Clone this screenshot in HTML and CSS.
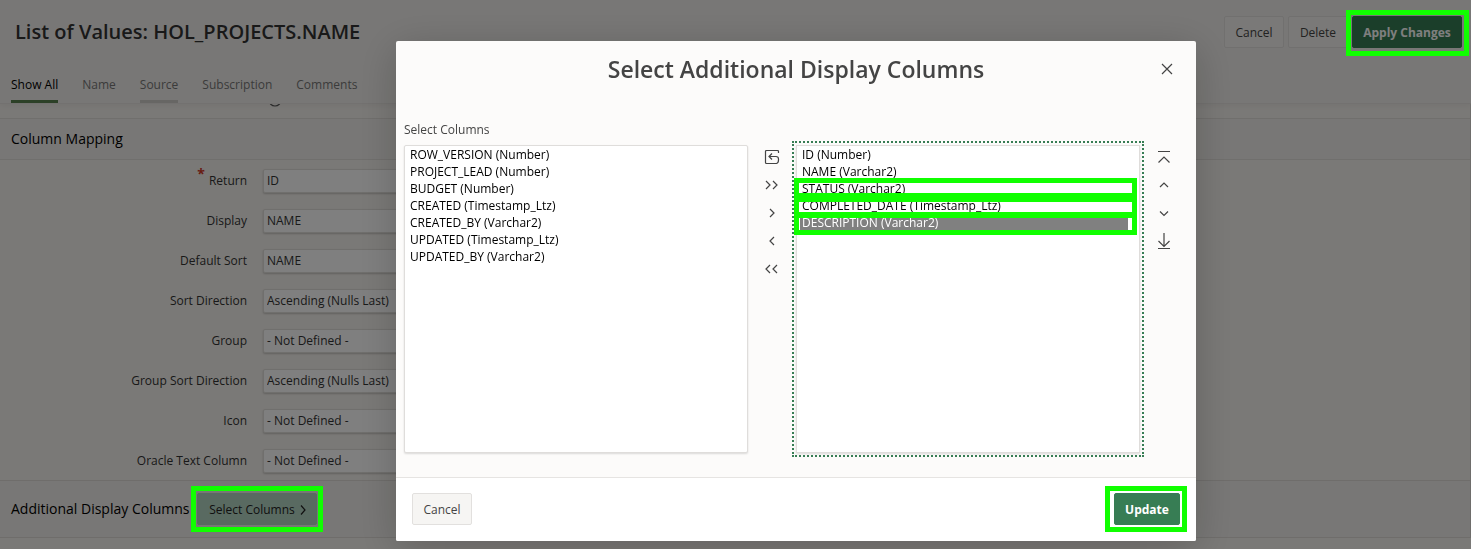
FILE: index.html
```html
<!DOCTYPE html>
<html lang="en">
<head>
<meta charset="utf-8">
<title>List of Values: HOL_PROJECTS.NAME</title>
<link rel="stylesheet" href="styles.css">
</head>
<body>
<header class="page-header">
  <div class="title-bar">
    <h1 class="page-title">List of Values: HOL_PROJECTS.NAME</h1>
    <div class="page-actions">
      <button class="btn" type="button">Cancel</button>
      <button class="btn btn-delete" type="button">Delete</button>
      <span class="marked marked-apply"><button class="btn btn-hot" type="button">Apply Changes</button><span class="mark"></span></span>
    </div>
  </div>
  <nav class="tabs">
    <a class="tab tab-current" href="#all">Show All</a>
    <a class="tab" href="#name">Name</a>
    <a class="tab tab-hover" href="#source">Source</a>
    <a class="tab" href="#subscription">Subscription</a>
    <a class="tab" href="#comments">Comments</a>
  </nav>
</header>
<main class="page-body">
  <div class="previous-end">
    <svg class="help-edge" width="14" height="4" viewBox="0 10 14 4"><circle cx="7" cy="6" r="6" fill="none" stroke="#555"/></svg>
  </div>
  <h2 class="section-title">Column Mapping</h2>
  <div class="form">
    <div class="field"><label class="required" for="f1">Return</label><select id="f1"><option>ID</option></select></div>
    <div class="field"><label for="f2">Display</label><select id="f2"><option>NAME</option></select></div>
    <div class="field"><label for="f3">Default Sort</label><select id="f3"><option>NAME</option></select></div>
    <div class="field"><label for="f4">Sort Direction</label><select id="f4"><option>Ascending (Nulls Last)</option></select></div>
    <div class="field"><label for="f5">Group</label><select id="f5"><option>- Not Defined -</option></select></div>
    <div class="field"><label for="f6">Group Sort Direction</label><select id="f6"><option>Ascending (Nulls Last)</option></select></div>
    <div class="field"><label for="f7">Icon</label><select id="f7"><option>- Not Defined -</option></select></div>
    <div class="field"><label for="f8">Oracle Text Column</label><select id="f8"><option>- Not Defined -</option></select></div>
  </div>
  <div class="section-bar">
    <h2 class="bar-title">Additional Display Columns</h2>
    <span class="marked"><button class="btn btn-select" type="button">Select Columns <svg width="6" height="10" viewBox="0 0 6 10"><path d="M1 .5 5 5 1 9.5"/></svg></button><span class="mark"></span></span>
  </div>
</main>

<div class="overlay">
  <section class="dialog" role="dialog" aria-labelledby="dlg-title">
    <header class="dialog-header">
      <h2 class="dialog-title" id="dlg-title">Select Additional Display Columns</h2>
      <button class="icon-btn close" type="button" aria-label="Close"><svg width="12" height="12" viewBox="0 0 12 12"><path d="M1 1 11 11M11 1 1 11"/></svg></button>
    </header>
    <div class="dialog-body">
      <label class="shuttle-label" for="available">Select Columns</label>
      <div class="shuttle">
        <select class="list" id="available" multiple size="18">
          <option>ROW_VERSION (Number)</option>
          <option>PROJECT_LEAD (Number)</option>
          <option>BUDGET (Number)</option>
          <option>CREATED (Timestamp_Ltz)</option>
          <option>CREATED_BY (Varchar2)</option>
          <option>UPDATED (Timestamp_Ltz)</option>
          <option>UPDATED_BY (Varchar2)</option>
        </select>
        <div class="controls">
          <button class="icon-btn" type="button" aria-label="Reset"><svg width="16" height="16" viewBox="0 0 16 16"><path d="M14.500 4V2.500Q14.500 1.500 13.500 1.500H2.500Q1.500 1.500 1.500 2.500V13.500Q1.500 14.500 2.500 14.500H12.500Q14.500 14 14.500 11V10Q14.500 7.500 12 7.500H5M8 4.500 5 7.500 8 10.500"/></svg></button>
          <button class="icon-btn" type="button" aria-label="Move all"><svg width="16" height="16" viewBox="0 0 16 16"><path d="M2 4 6 8 2 12M9 4 13 8 9 12"/></svg></button>
          <button class="icon-btn" type="button" aria-label="Move"><svg width="16" height="16" viewBox="0 0 16 16"><path d="M6 4 10 8 6 12"/></svg></button>
          <button class="icon-btn" type="button" aria-label="Remove"><svg width="16" height="16" viewBox="0 0 16 16"><path d="M10 4 6 8 10 12"/></svg></button>
          <button class="icon-btn" type="button" aria-label="Remove all"><svg width="16" height="16" viewBox="0 0 16 16"><path d="M6 4 2 8 6 12M13 4 9 8 13 12"/></svg></button>
        </div>
        <div class="chosen">
          <select class="list list-focus" multiple size="18" aria-label="Selected columns">
            <option>ID (Number)</option>
            <option>NAME (Varchar2)</option>
            <option>STATUS (Varchar2)</option>
            <option>COMPLETED_DATE (Timestamp_Ltz)</option>
            <option selected>DESCRIPTION (Varchar2)</option>
          </select>
          <span class="row-mark row-mark-status"></span>
          <span class="row-mark row-mark-date"></span>
          <span class="row-mark row-mark-description"></span>
        </div>
        <div class="controls">
          <button class="icon-btn" type="button" aria-label="Top"><svg width="16" height="16" viewBox="0 0 16 16"><path d="M2 2.500H14M2.500 13.500 8 8 13.500 13.500"/></svg></button>
          <button class="icon-btn" type="button" aria-label="Up"><svg width="16" height="16" viewBox="0 0 16 16"><path d="M4 10 8 6 12 10"/></svg></button>
          <button class="icon-btn" type="button" aria-label="Down"><svg width="16" height="16" viewBox="0 0 16 16"><path d="M4 6.500 8 10.500 12 6.500"/></svg></button>
          <button class="icon-btn" type="button" aria-label="Bottom"><svg width="16" height="16" viewBox="0 0 16 16"><path d="M8 0V13M2.500 8 8 13.500 13.500 8M2 15.500H14"/></svg></button>
        </div>
      </div>
    </div>
    <footer class="dialog-footer">
      <button class="btn" type="button">Cancel</button>
      <span class="marked marked-update"><button class="btn btn-hot" type="button">Update</button><span class="mark"></span></span>
    </footer>
  </section>
</div>
</body>
</html>
```
FILE: styles.css
```css
* { box-sizing: border-box; }
body {
  margin: 0;
  min-height: 100vh;
  overflow: hidden;
  background: #f5f2ee;
  color: #333;
  font: 12px/16px "Open Sans", "Noto Sans", sans-serif;
}
h1, h2 { margin: 0; }
button, select { font: inherit; color: inherit; }
svg { display: block; fill: none; stroke: currentColor; stroke-width: 1.2; }

.page-header {
  background: #f1efec;
  border-bottom: 1px solid #e6e3e0;
  box-shadow: 0 2px 6px #0000000d;
}
.title-bar {
  display: flex;
  align-items: center;
  justify-content: space-between;
  height: 64px;
  padding: 0 9px 0 15px;
}
.page-title { font-size: 20px; line-height: 28px; font-weight: 600; }
.page-actions { display: flex; gap: 4px; }
.btn {
  display: inline-flex;
  align-items: center;
  justify-content: center;
  gap: 5px;
  height: 32px;
  min-width: 60px;
  padding: 1px 10px 0;
  border: 1px solid #e2e0de;
  border-radius: 2px;
  background: #f6f5f3;
  color: #444;
}
.page-actions .btn { background: #f5f3f0; }
.btn-hot, .page-actions .btn-hot {
  border-color: #377d54;
  background: #377d54;
  color: #fff;
  font-weight: 700;
}
.marked { position: relative; display: inline-flex; }
.mark {
  position: absolute;
  z-index: 20;
  inset: -7px -6px;
  border: 5px solid #10ff00;
  pointer-events: none;
}
.marked-apply .mark { inset: -6px -7px -8px -6px; }
.marked-apply .btn { min-width: 110px; }
.marked-update .mark { inset: -7px -7px -7px -9px; }
.marked-update .btn { min-width: 66px; }

.tabs { display: flex; gap: 24px; padding: 8px 11px 0; }
.tab {
  padding: 5px 0 7px;
  border-bottom: 3px solid transparent;
  color: #777;
  text-decoration: none;
}
.tab-current { color: #000; border-color: #58804f; }
.tab-hover { border-color: #cfccc9; }

.page-body { border-right: 1px solid #dddad7; }
.previous-end { height: 14px; padding-left: 268px; }
.section-title, .bar-title { font-size: 14px; font-weight: 400; color: #000; }
.section-title {
  padding: 12px 11px;
  border: 1px solid #e1deda;
  border-width: 1px 0;
  background: #f1efec;
  line-height: 16px;
}
.form { height: 320px; padding-top: 1px; }
.field {
  display: grid;
  grid-template-columns: 247px minmax(0, 400px);
  column-gap: 16px;
  align-items: center;
  height: 40px;
}
.field label { text-align: right; }
.required::before {
  content: "*";
  color: #d0392b;
  font-size: 14px;
  font-weight: 700;
  vertical-align: 6px;
  line-height: 1px;
  margin-right: 4px;
}
.field select {
  appearance: none;
  height: 24px;
  padding: 0 3px;
  border: 1px solid #e0deda;
  border-radius: 2px;
  background: #fff;
  box-shadow: 0 1px 2px #0003;
}
.section-bar {
  display: flex;
  align-items: center;
  gap: 8px;
  height: 58px;
  padding: 0 11px;
  border: 1px solid #dedbd7;
  border-width: 1px 0;
  background: #f1efec;
}
.btn-select {
  padding: 1px 8px 0;
  min-width: 120px;
  background: #b3d4c2;
  border-color: #b3d4c2;
  color: #222;
}

.overlay {
  position: fixed;
  z-index: 10;
  inset: 0;
  display: flex;
  justify-content: center;
  align-items: flex-start;
  padding: 41px 0 0 121px;
  background: #00000080;
}
.dialog {
  width: 100%;
  max-width: 800px;
  border-radius: 2px;
  background: #fcfbfa;
  box-shadow: 0 8px 40px #0003;
}
.dialog-header {
  display: grid;
  grid-template-columns: 28px 1fr 28px;
  align-items: center;
  padding: 12px 15px 0;
}
.dialog-title {
  grid-column: 2;
  text-align: center;
  font-size: 23px;
  line-height: 32px;
  font-weight: 600;
  color: #444;
}
.icon-btn {
  display: grid;
  place-items: center;
  width: 28px;
  height: 28px;
  padding: 0;
  border: 0;
  background: none;
  color: #444;
}
.dialog-body { padding: 37px 8px 24px; }
.shuttle-label { display: block; color: #444; margin-bottom: 7px; }
.shuttle { display: grid; grid-template-columns: 1fr 48px 1fr 48px; }
.chosen { position: relative; }
.list {
  width: 100%;
  height: 308px;
  padding: 0 11px 0 3px;
  border: 1px solid #dfdddb;
  border-radius: 2px;
  background: #fff;
  color: #000;
  box-shadow: 0 1px 2px #0002;
  overflow: auto;
}
.list option { min-height: 17px; padding: 0 2px; line-height: 17px; }
.list option:checked { color: #fff; background: #808080 linear-gradient(#808080, #808080); }
.list-focus { display: block; border-radius: 0; outline: 2px dotted #377d54; outline-offset: 2px; }
.row-mark {
  position: absolute;
  left: -2px;
  right: 3px;
  height: 20px;
  border: 5px solid #10ff00;
  pointer-events: none;
}
.row-mark-status { top: 33px; }
.row-mark-date { top: 52px; }
.row-mark-description { top: 68px; height: 22px; }
.controls { display: flex; flex-direction: column; align-items: center; margin-top: -2px; }
.dialog-footer {
  display: flex;
  justify-content: space-between;
  padding: 15px 16px 16px;
  border-top: 1px solid #e6e4e2;
  border-radius: 0 0 2px 2px;
  background: #fff;
}
```
